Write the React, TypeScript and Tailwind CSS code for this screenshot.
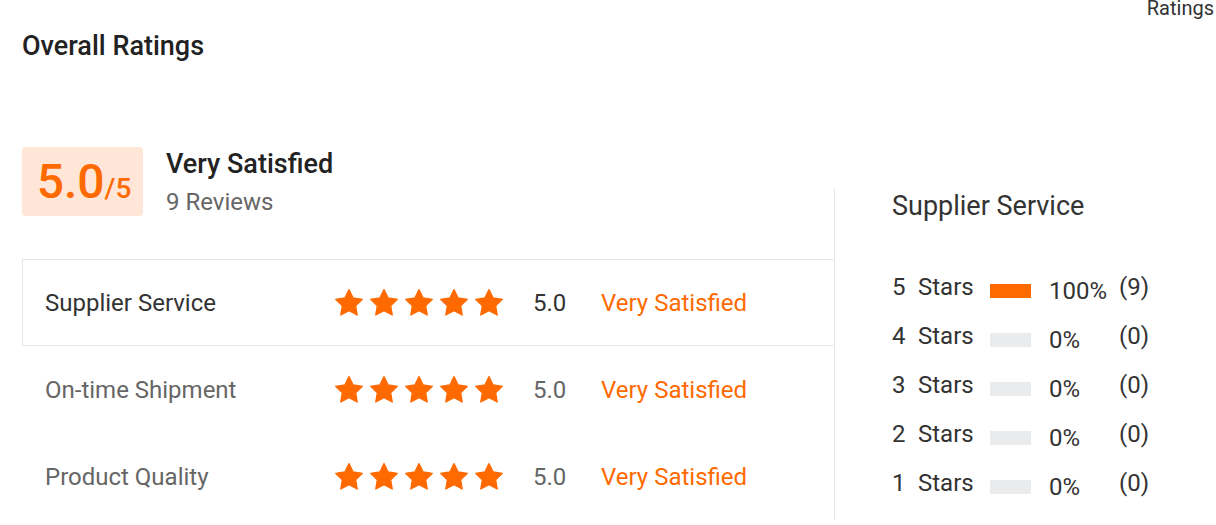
import React from "react";

const ORANGE = "#ff6a00";

function Star() {
  return (
    <svg width="28" height="28" viewBox="1.5 1.5 21 21" className="shrink-0">
      <polygon
        points="12 2 15.09 8.26 22 9.27 17 14.14 18.18 21.02 12 17.77 5.82 21.02 7 14.14 2 9.27 8.91 8.26"
        fill={ORANGE}
        stroke={ORANGE}
        strokeWidth="1"
        strokeLinejoin="round"
      />
    </svg>
  );
}

function Stars() {
  return (
    <div className="flex items-center gap-[7px]">
      <Star />
      <Star />
      <Star />
      <Star />
      <Star />
    </div>
  );
}

const rows = [
  { label: "Supplier Service", active: true },
  { label: "On-time Shipment", active: false },
  { label: "Product Quality", active: false },
];

const dist = [
  { n: 5, pct: "100%", count: "(9)", fill: 100 },
  { n: 4, pct: "0%", count: "(0)", fill: 0 },
  { n: 3, pct: "0%", count: "(0)", fill: 0 },
  { n: 2, pct: "0%", count: "(0)", fill: 0 },
  { n: 1, pct: "0%", count: "(0)", fill: 0 },
];

export default function App() {
  return (
    <div
      className="w-[1216px] h-[525px] overflow-hidden bg-white text-[#333]"
      style={{ fontFamily: "Roboto, 'Noto Sans', sans-serif" }}
    >
      <div className="flex justify-end pr-[2px] h-[20px] mt-[-2px] text-[20px] leading-[20px] text-[#333]">
        Ratings
      </div>
      <div className="pl-[22px] mt-[15px] text-[27px] leading-[27px] font-medium text-[#222]">
        Overall Ratings
      </div>
      <div className="flex mt-[87px] pl-[22px]">
        <div className="w-[812px] flex flex-col">
          <div className="flex items-start">
            <div className="w-[121px] h-[69px] rounded-[4px] bg-[#ffe6d7] flex items-center justify-center">
              <div className="flex items-baseline text-[#ff6a00] font-medium pl-[3px]">
                <span className="text-[48px] leading-[48px]">5.0</span>
                <span className="text-[28px] leading-[28px]">/5</span>
              </div>
            </div>
            <div className="ml-[23px] flex flex-col">
              <div className="text-[27px] leading-[32px] font-medium text-[#222] mt-[1px]">
                Very Satisfied
              </div>
              <div className="text-[24px] leading-[28px] text-[#666] mt-[8px]">9 Reviews</div>
            </div>
          </div>
          <div className="mt-[43px] flex flex-col">
            {rows.map((r) => (
              <div
                key={r.label}
                className={
                  "h-[87px] flex items-center pl-[22px] " +
                  (r.active ? "border border-r-0 border-[#e6e6e6]" : "border border-transparent border-r-0")
                }
              >
                <div
                  className={
                    "w-[290px] text-[24px] " + (r.active ? "text-[#333]" : "text-[#666]")
                  }
                >
                  {r.label}
                </div>
                <Stars />
                <div className={"ml-[30px] w-[68px] text-[24px] " + (r.active ? "text-[#333]" : "text-[#666]")}>
                  5.0
                </div>
                <div className="text-[24px] text-[#ff6a00]">Very Satisfied</div>
              </div>
            ))}
          </div>
        </div>
        <div className="mt-[42px] border-l border-[#e6e6e6] pl-[57px] flex flex-col">
          <div className="text-[27px] leading-[30px] text-[#333] mt-[2px]">Supplier Service</div>
          <div className="mt-[52px] flex flex-col gap-[21px]">
            {dist.map((d) => (
              <div key={d.n} className="flex items-center h-[28px] text-[24px] text-[#333]">
                <span className="w-[26px]">{d.n}</span>
                <span className="w-[72px]">Stars</span>
                <div className="w-[41px] h-[14px] bg-[#eaebed] mt-[7px]">
                  <div className="h-full bg-[#ff6a00]" style={{ width: d.fill + "%" }} />
                </div>
                <span className="ml-[18px] w-[70px] mt-[8px]">{d.pct}</span>
                <span>{d.count}</span>
              </div>
            ))}
          </div>
        </div>
      </div>
    </div>
  );
}
